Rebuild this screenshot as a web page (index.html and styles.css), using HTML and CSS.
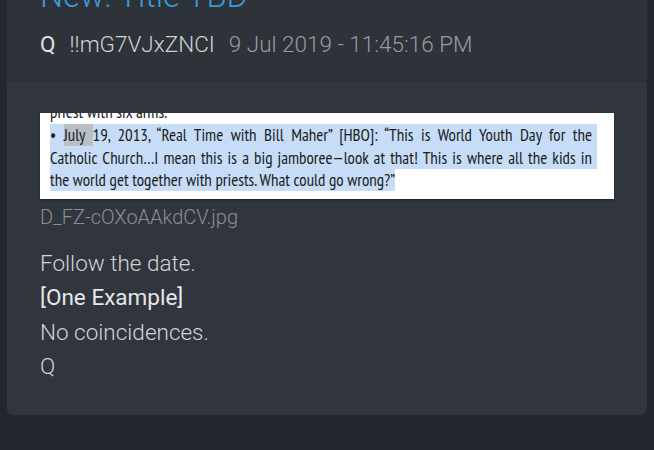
FILE: index.html
```html
<!DOCTYPE html>
<html lang="en">
<head>
    <meta charset="UTF-8">
    <meta name="viewport" content="width=device-width, initial-scale=1.0">
    <title>Post</title>
    <link rel="stylesheet" href="styles.css">
</head>
<body>
    <div class="page">
        <article class="post">
            <header class="post-head">
                <h2 class="post-title">New: Title TBD</h2>
                <div class="post-meta">
                    <span class="author">Q</span>
                    <span class="trip">!!mG7VJxZNCI</span>
                    <span class="date">9 Jul 2019 - 11:45:16 PM</span>
                </div>
            </header>
            <div class="post-body">
                <figure class="shot">
                    <div class="shot-text">
                        <p class="cut">priest with six arms.</p>
                        <p class="line sel full">• <span class="word">July </span>19, 2013, “Real Time with Bill Maher” [HBO]: “This is World Youth Day for the</p>
                        <p class="line sel full">Catholic Church…I mean this is a big jamboree—look at that! This is where all the kids in</p>
                        <p class="line"><span class="sel">the world get together with priests. What could go wrong?”</span></p>
                    </div>
                </figure>
                <div class="filename">D_FZ-cOXoAAkdCV.jpg</div>
                <div class="message">
                    <p>Follow the date.</p>
                    <p class="strong">[One Example]</p>
                    <p>No coincidences.</p>
                    <p>Q</p>
                </div>
            </div>
        </article>
    </div>
</body>
</html>
```

FILE: styles.css
```css
body {
    margin: 0;
    background: #23262d;
    font-family: 'Roboto', 'Liberation Sans', sans-serif;
    overflow: hidden;
}
.page {
    padding: 0 7px;
}
.post {
    margin-top: -40px;
    background: #31353d;
    border-radius: 0 0 6px 6px;
    overflow: hidden;
}
.post-head {
    background: #2e3239;
    padding: 18px 33px 22px;
    border-bottom: 1px solid #282b32;
}
.post-title {
    margin: 0;
    font-size: 32.5px;
    line-height: 36px;
    font-weight: 300;
    color: #3b9bd2;
}
.post-meta {
    margin-top: 15px;
    display: flex;
    gap: 14px;
    font-size: 22.5px;
    line-height: 30px;
    font-weight: 300;
}
.author {
    color: #dfe0e3;
    font-weight: 400;
}
.trip {
    color: #cfd1d5;
}
.date {
    color: #989ba1;
}
.post-body {
    padding: 31px 33px 32px;
}
.shot {
    margin: 0;
    width: 574px;
    height: 86px;
    background: #fff;
    overflow: hidden;
    box-shadow: 0 1px 2px rgba(0, 0, 0, 0.4);
}
.shot-text {
    margin-top: -11.7px;
    padding: 0 17px 0 10px;
    font-family: 'PT Sans Narrow', 'Liberation Sans Narrow', 'DejaVu Sans Condensed', sans-serif;
    font-size: 17px;
    line-height: 22.7px;
    color: #1c1c1c;
}
.shot-text p {
    margin: 0;
    white-space: nowrap;
}
.full {
    text-align: justify;
    text-align-last: justify;
    white-space: normal !important;
    padding-right: 5px;
}
.sel {
    background: #c6dcf7;
}
.word {
    background: #babec6;
}
.filename {
    margin-top: 6px;
    font-size: 20px;
    line-height: 24px;
    font-weight: 300;
    color: #8b8e94;
}
.message {
    margin-top: 17px;
    font-size: 22.5px;
    line-height: 34.3px;
    font-weight: 300;
    color: #d2d4d8;
}
.message p {
    margin: 0;
}
.message .strong {
    font-weight: 400;
    color: #e6e7ea;
}
```
